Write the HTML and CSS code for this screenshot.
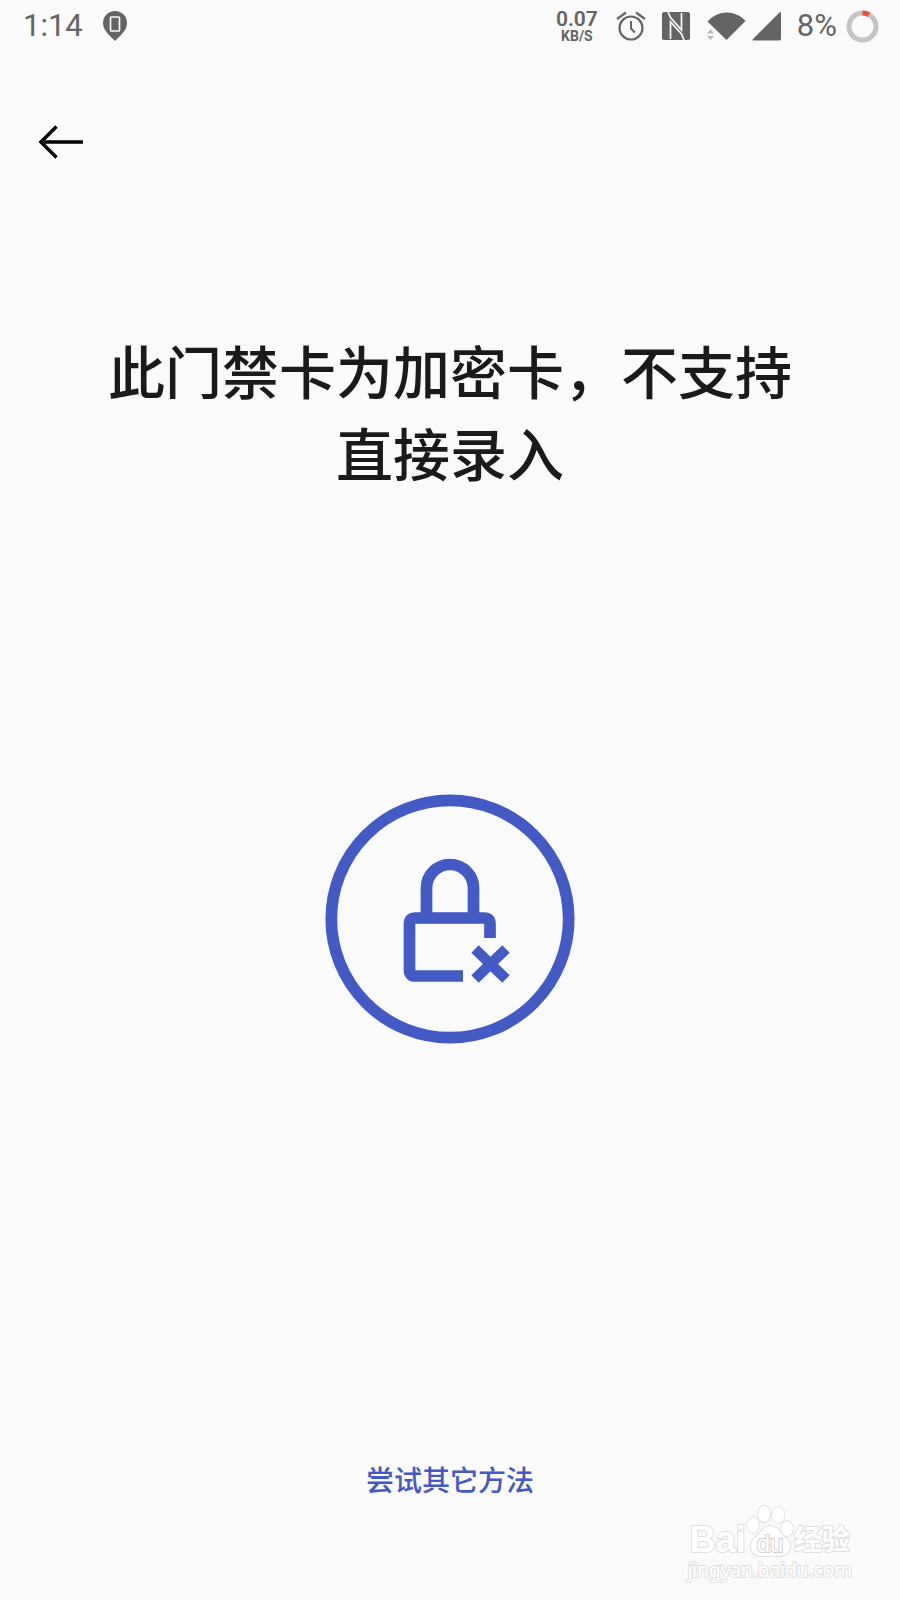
FILE: index.html
```html
<!DOCTYPE html>
<html lang="zh-CN">
<head>
  <meta charset="UTF-8" />
  <meta name="viewport" content="width=device-width, initial-scale=1.0" />
  <title>门禁卡</title>
  <link rel="stylesheet" href="styles.css">
</head>
<body>
  <div class="status-bar">
    <span class="time">1:14</span>
    <svg class="pin" width="24" height="30" viewBox="0 0 24 30">
      <path fill="#646464" d="M12 0C5.400 0 0 5.300 0 12c0 4.500 2.400 8 5.500 11.500L12 30l6.500-6.500C21.600 20 24 16.500 24 12 24 5.300 18.600 0 12 0z"/>
      <rect x="7.500" y="6" width="9" height="14" rx="1" fill="none" stroke="#fafafa" stroke-width="1.700"/>
    </svg>
    <div class="status-icons">
      <div class="speed">
        <span class="speed-value">0.07</span>
        <span class="speed-unit">KB/S</span>
      </div>
      <svg class="alarm" width="30" height="30" viewBox="0 0 30 30" fill="none" stroke="#666">
        <circle cx="15" cy="17" r="11.500" stroke-width="2.200"/>
        <path d="M15 10v7.500l4 4" stroke-width="2"/>
        <path d="M1 8l9-6.500M29 8l-9-6.500" stroke-width="2.300"/>
      </svg>
      <svg class="nfc" width="28" height="28" viewBox="0 0 28 28">
        <rect width="28" height="28" rx="2" fill="#646464"/>
        <path d="M8.500 27V10L19.500 22 22 28M19.500 1V18L8.500 5.500 6 0" fill="none" stroke="#fafafa" stroke-width="1.700"/>
      </svg>
      <svg class="wifi" width="40" height="28" viewBox="0 0 40 28">
        <path fill="#646464" d="M1.500 9.500C12.500-2.500 29-2.500 39.500 9L20.500 28z"/>
        <path fill="#b9b9b9" stroke="#fafafa" stroke-width="1" d="M0 22l4.500-5.500L9 22zM0 23.500h9L4.500 28.500z"/>
      </svg>
      <svg class="signal" width="29" height="29" viewBox="0 0 29 29">
        <path fill="#646464" d="M28 0q1 0 1 1v26q0 1.500-1.500 1.500H1Q0 28.500 1 27z"/>
      </svg>
      <span class="percent">8%</span>
      <svg class="battery" width="33" height="33" viewBox="0 0 33 33" fill="none" stroke-width="5">
        <circle cx="16.500" cy="16.500" r="13.500" stroke="#c4c4c4"/>
        <path d="M16.500 3a13.500 13.500 0 0 1 6.500 1.700" stroke="#e8532f"/>
      </svg>
    </div>
  </div>

  <header class="toolbar">
    <button class="back" aria-label="返回">
      <svg width="44" height="34" viewBox="0 0 44 34" fill="none" stroke="#000" stroke-width="3.400">
        <path d="M17.500 1.500L2 17l15.500 15.500M2 17h42"/>
      </svg>
    </button>
  </header>

  <main>
    <h1>此门禁卡为加密卡，不支持直接录入</h1>
    <svg class="lock" width="250" height="250" viewBox="0 0 250 250" fill="none" stroke="#4359c4" stroke-width="11.700">
      <circle cx="125" cy="125" r="118.700"/>
      <path d="M101.500 120V94a23.500 23.500 0 0 1 47 0v26"/>
      <path d="M165 144V130q0-6-6-6H90.500q-6 0-6 6v46q0 6 6 6H138"/>
      <path d="M150 155l31 30M181 155l-31 30" stroke-width="10.500"/>
    </svg>
    <a class="other" href="#">尝试其它方法</a>
  </main>

  <div class="watermark">
    <div class="brand">
      <span class="bai">Bai</span>
      <svg class="paw" width="48" height="54" viewBox="0 0 48 54">
        <g fill="#fff" stroke="#d6d6d6" stroke-width="1.300">
          <ellipse cx="7" cy="21" rx="6" ry="8"/>
          <ellipse cx="18" cy="10" rx="6" ry="8.500"/>
          <ellipse cx="32" cy="11" rx="6.500" ry="8"/>
          <ellipse cx="41" cy="24.500" rx="6" ry="7.500"/>
          <path d="M24 22c-8 0-9 7-15 12-7 5-6 17 5 18 7 0 13 1 20 0 12-1 13-13 6-18-6-5-8-12-16-12z"/>
        </g>
        <text class="du" x="24" y="48" text-anchor="middle">du</text>
      </svg>
      <span class="jingyan">经验</span>
    </div>
    <div class="site">jingyan.baidu.com</div>
  </div>
</body>
</html>
```
FILE: styles.css
```css
* {
  box-sizing: border-box;
}
body {
  margin: 0;
  min-height: 100vh;
  display: flex;
  flex-direction: column;
  position: relative;
  background-color: #fafafa;
  color: #1a1a1a;
  font-family: Roboto, "Noto Sans CJK SC", sans-serif;
}
.status-bar {
  display: flex;
  align-items: center;
  height: 52px;
  padding: 0 21px 0 23px;
  color: #646464;
}
.time,
.percent {
  font-size: 31px;
  line-height: 52px;
}
.pin {
  margin-left: 20px;
}
.status-icons {
  display: flex;
  align-items: center;
  margin-left: auto;
}
.speed {
  display: flex;
  flex-direction: column;
  align-items: center;
  margin-right: 18px;
}
.speed-value {
  font-size: 21px;
  font-weight: 600;
  line-height: 19px;
}
.speed-unit {
  font-size: 14px;
  font-weight: 700;
  line-height: 14px;
}
.alarm,
.nfc {
  margin-right: 16px;
}
.wifi {
  margin-right: 6px;
}
.signal {
  margin-right: 16px;
}
.percent {
  margin-right: 9px;
}

.toolbar {
  padding: 73px 39px 0;
}
.back {
  display: flex;
  padding: 0;
  border: 0;
  background: none;
  cursor: pointer;
}

main {
  flex: 1;
  display: flex;
  flex-direction: column;
  align-items: center;
  padding: 175px 100px 97px;
}
h1 {
  margin: 0;
  font-size: 57px;
  font-weight: 500;
  line-height: 82px;
  text-align: center;
}
.lock {
  margin-top: 296px;
}
.other {
  margin-top: auto;
  color: #4359c4;
  font-size: 28px;
  font-weight: 500;
  line-height: 42px;
  text-decoration: none;
}

/* site mark over the bottom right corner */
.watermark {
  position: absolute;
  right: 48px;
  bottom: 18px;
  color: #fff;
  paint-order: stroke fill;
  -webkit-text-stroke: 2px #e0e0e0;
}
.brand {
  display: flex;
  align-items: flex-end;
  justify-content: center;
}
.bai {
  font-family: "Liberation Sans", sans-serif;
  font-size: 36px;
  font-weight: 700;
  line-height: 36px;
}
.du {
  font-family: "Liberation Sans", sans-serif;
  font-size: 24px;
  fill: #fff;
  stroke: #d0d0d0;
  stroke-width: 2px;
}
.jingyan {
  font-size: 28px;
  font-weight: 700;
  line-height: 34px;
}
.site {
  font-family: "Noto Sans", sans-serif;
  font-size: 19px;
  line-height: 24px;
}
```
